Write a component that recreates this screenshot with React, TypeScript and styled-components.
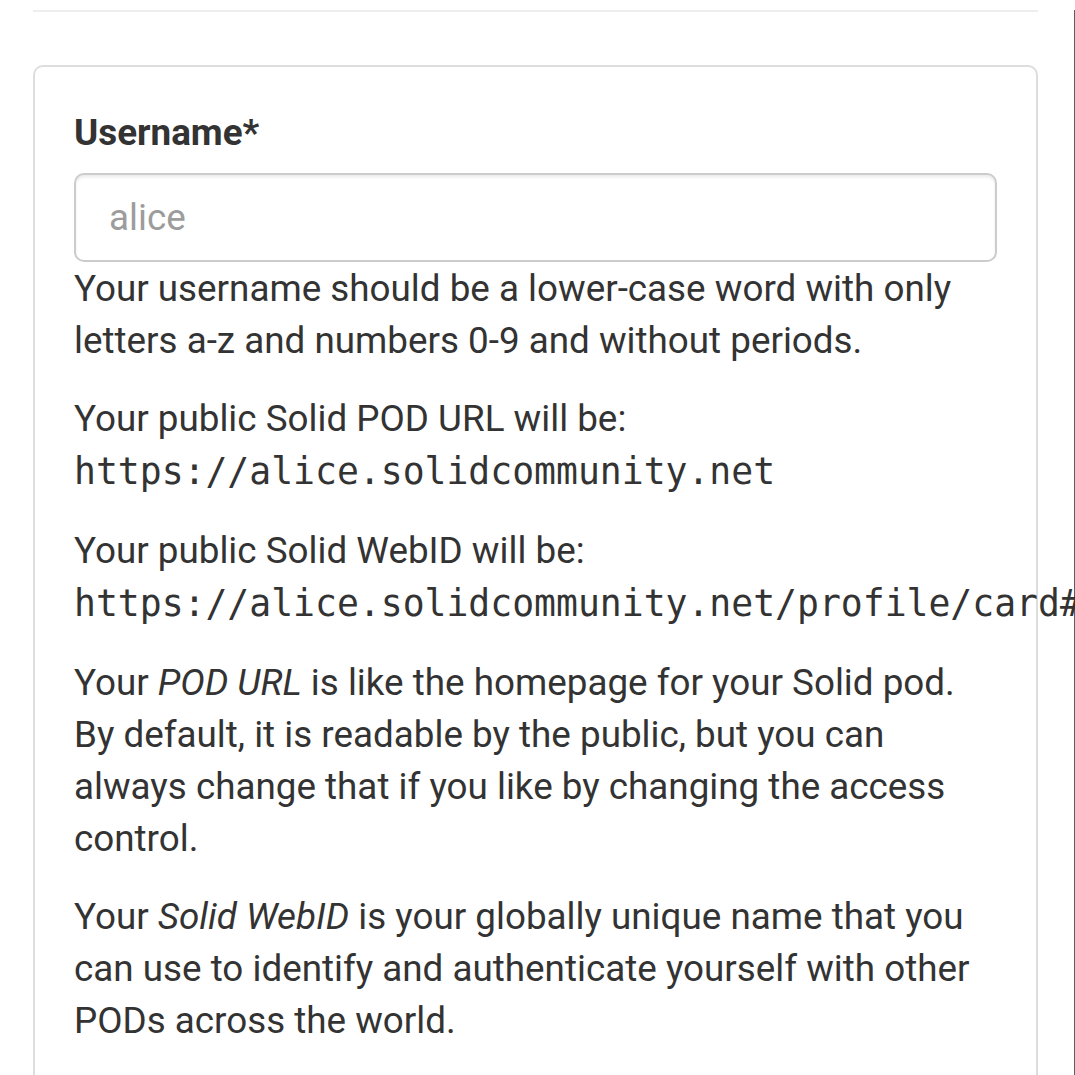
import React from "react";
import styled, { createGlobalStyle } from "styled-components";

const Global = createGlobalStyle`
  html, body {
    margin: 0;
    padding: 0;
    background: #ffffff;
    overflow: hidden;
  }
  * { box-sizing: border-box; }
`;

const Page = styled.div`
  width: 1075px;
  min-height: 1075px;
  padding: 0 36px 0 33px;
  border-right: 1.5px solid #5e5e5e;
  font-family: Roboto, "Liberation Sans", sans-serif;
  font-size: 36.8px;
  line-height: 52px;
  color: #333333;
`;

const Rule = styled.hr`
  margin: 10px 0 53px;
  border: 0;
  border-top: 2.6px solid #eeeeee;
  height: 0;
`;

const Card = styled.section`
  border: 2.6px solid #dddddd;
  border-bottom: none;
  border-radius: 10px 10px 0 0;
  padding: 40px 39px 0;
  min-height: 1100px;
`;

const Label = styled.label`
  display: block;
  font-weight: 700;
  margin-bottom: 14px;
  color: #333333;
`;

const Input = styled.input`
  display: block;
  width: 100%;
  height: 89px;
  padding: 0 33px;
  font-family: Roboto, "Liberation Sans", sans-serif;
  font-size: 36.8px;
  color: #555555;
  border: 2.6px solid #cccccc;
  border-radius: 10px;
  box-shadow: inset 0 2.6px 2.6px rgba(0, 0, 0, 0.075);
  outline: none;
  &::placeholder {
    color: #9c9c9c;
  }
`;

const Para = styled.p`
  margin: 0 0 26px;
`;

const Help = styled(Para)`
  margin-top: 1px;
`;

const Code = styled.span`
  display: inline-block;
  line-height: 54px;
  font-family: "DejaVu Sans Mono", "Liberation Mono", monospace;
  font-size: 36.4px;
  white-space: nowrap;
  color: #333333;
`;

export default function App() {
  return (
    <>
      <Global />
      <Page>
        <Rule />
        <Card>
          <Label htmlFor="username">Username*</Label>
          <Input id="username" placeholder="alice" />
          <Help>
            Your username should be a lower-case word with only letters a-z and
            numbers 0-9 and without periods.
          </Help>
          <Para>
            Your public Solid POD URL will be:
            <br />
            <Code>https://alice.solidcommunity.net</Code>
          </Para>
          <Para>
            Your public Solid WebID will be:
            <br />
            <Code>https://alice.solidcommunity.net/profile/card#me</Code>
          </Para>
          <Para>
            Your <em>POD URL</em> is like the homepage for your Solid pod. By
            default, it is readable by the public, but you can always change
            that if you like by changing the access control.
          </Para>
          <Para>
            Your <em>Solid WebID</em> is your globally unique name that you can
            use to identify and authenticate yourself with other PODs across
            the world.
          </Para>
        </Card>
      </Page>
    </>
  );
}
